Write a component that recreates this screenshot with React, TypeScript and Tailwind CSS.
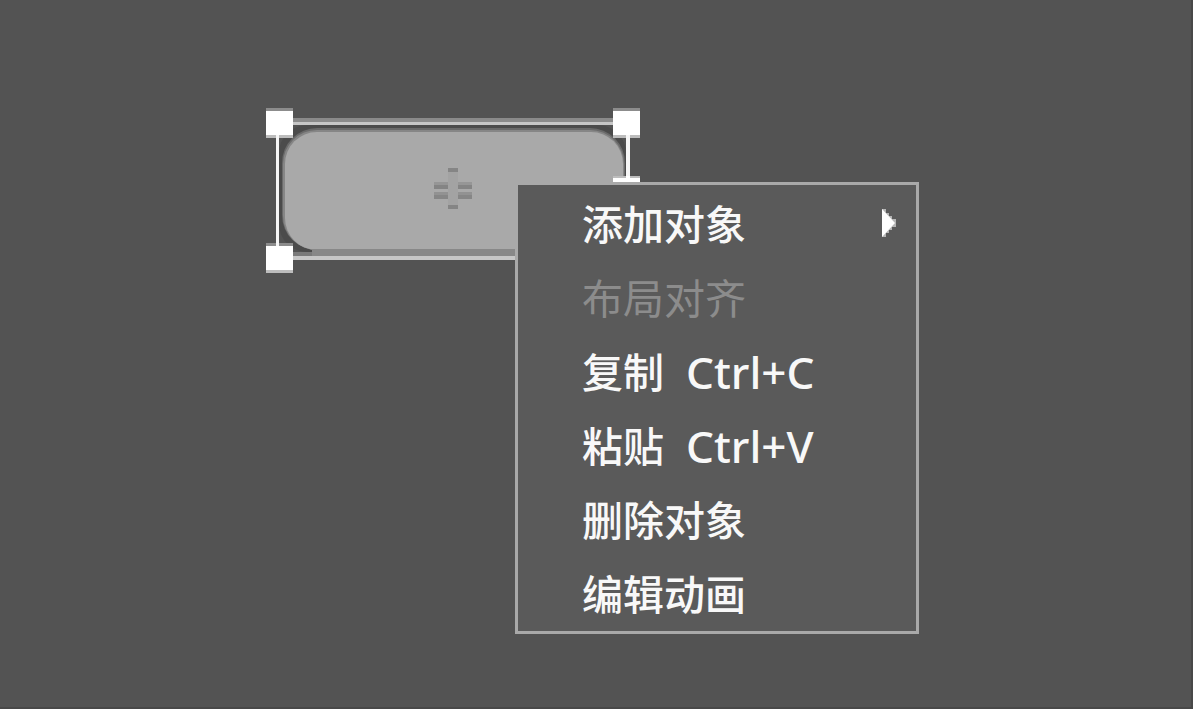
import React from "react";

type MenuItem = {
  label: string;
  shortcut?: string;
  disabled?: boolean;
  submenu?: boolean;
};

const items: MenuItem[] = [
  { label: "添加对象", submenu: true },
  { label: "布局对齐", disabled: true },
  { label: "复制", shortcut: "Ctrl+C" },
  { label: "粘贴", shortcut: "Ctrl+V" },
  { label: "删除对象" },
  { label: "编辑动画" },
];

function Handle({ x, y }: { x: number; y: number }) {
  return (
    <g>
      <rect x={x} y={y} width="27" height="30" fill="#fff" />
      <rect x={x} y={y} width="27" height="3" fill="#8c8c8c" />
      <rect x={x} y={y + 27} width="27" height="3" fill="#bdbdbd" />
    </g>
  );
}

/* Selected shape with its frame, corner handles and centre mark */
function SelectedShape() {
  return (
    <svg
      className="absolute left-[266px] top-[108px]"
      width="374"
      height="165"
      viewBox="266 108 374 165"
      shapeRendering="crispEdges"
      aria-hidden="true"
    >
      <rect x="293" y="118" width="320" height="4" fill="#8a8a8a" />
      <rect x="293" y="122" width="320" height="3" fill="#c6c6c6" />
      <rect x="293" y="256" width="320" height="4" fill="#c6c6c6" />
      <g shapeRendering="geometricPrecision">
        <rect x="279" y="125" width="347" height="127" rx="28" fill="#4b4b4b" />
        <rect x="282" y="128" width="343" height="122" rx="35" fill="#6a6a6a" />
        <rect x="283" y="130" width="341" height="120" rx="34" fill="#868686" />
        <rect x="285" y="132" width="338" height="118" rx="32" fill="#a9a9a9" />
      </g>
      <rect x="312" y="249" width="300" height="7" fill="#888888" />
      <rect x="293" y="252" width="19" height="4" fill="#7a7a7a" />
      <rect x="276" y="136" width="3" height="110" fill="#f6f6f6" />
      <rect x="626" y="136" width="4" height="110" fill="#f6f6f6" />

      <rect x="448" y="168" width="10" height="41" fill="#a3a3a3" />
      <rect x="448" y="168" width="10" height="4" fill="#858585" />
      <rect x="448" y="205" width="10" height="4" fill="#858585" />
      <rect x="434" y="182" width="14" height="3" fill="#969696" />
      <rect x="458" y="182" width="14" height="3" fill="#969696" />
      <rect x="434" y="185" width="14" height="4" fill="#848484" />
      <rect x="458" y="185" width="14" height="4" fill="#848484" />
      <rect x="434" y="192" width="14" height="3" fill="#929292" />
      <rect x="458" y="192" width="14" height="3" fill="#929292" />
      <rect x="434" y="195" width="14" height="4" fill="#868686" />
      <rect x="458" y="195" width="14" height="4" fill="#868686" />

      <rect x="613" y="176" width="27" height="30" fill="#fff" />
      <rect x="613" y="176" width="13" height="2" fill="#bdbdbd" />
      <rect x="630" y="176" width="10" height="2" fill="#bdbdbd" />
      <Handle x={266} y={108} />
      <Handle x={613} y={108} />
      <Handle x={266} y={243} />
      <rect x="276" y="135" width="3" height="3" fill="#f6f6f6" />
      <rect x="276" y="243" width="3" height="3" fill="#f6f6f6" />
      <rect x="626" y="135" width="4" height="3" fill="#f6f6f6" />
    </svg>
  );
}

function ContextMenu() {
  return (
    <div
      role="menu"
      className="absolute left-[515px] top-[182px] flex w-[404px] flex-col border-[3px] border-[#a9a9a9] bg-[#5a5a5a] py-px"
    >
      {items.map((item) => (
        <button
          key={item.label}
          type="button"
          role="menuitem"
          disabled={item.disabled}
          className="flex h-[74px] items-center pl-16 pr-5 text-left text-[41px] font-medium leading-none text-[#f8f8f8] disabled:font-normal disabled:text-[#8c8c8c]"
        >
          <span className="pt-0.5">{item.label}</span>
          {item.shortcut && (
            <span className="ml-[22px] pt-0.5 text-[44px]">
              {item.shortcut}
            </span>
          )}
          {item.submenu && (
            <svg
              className="ml-auto"
              width="14"
              height="28"
              viewBox="0 0 14 28"
              aria-hidden="true"
            >
              <path
                d="M0 0H4V4H7V7H10V10H14V18H10V21H7V24H4V28H0Z"
                fill="#b5b5b5"
              />
              <path d="M0 0L13 14L0 28Z" fill="#fff" />
            </svg>
          )}
        </button>
      ))}
    </div>
  );
}

export default function App() {
  return (
    <div className="flex min-h-screen bg-white pb-1 pr-[7px] font-['Noto_Sans','Noto_Sans_CJK_SC',sans-serif]">
      <main className="relative flex-1 overflow-hidden border-b-2 border-r-2 border-b-[#484848] border-r-[#484848] bg-[#535353]">
        <SelectedShape />
        <ContextMenu />
      </main>
    </div>
  );
}
